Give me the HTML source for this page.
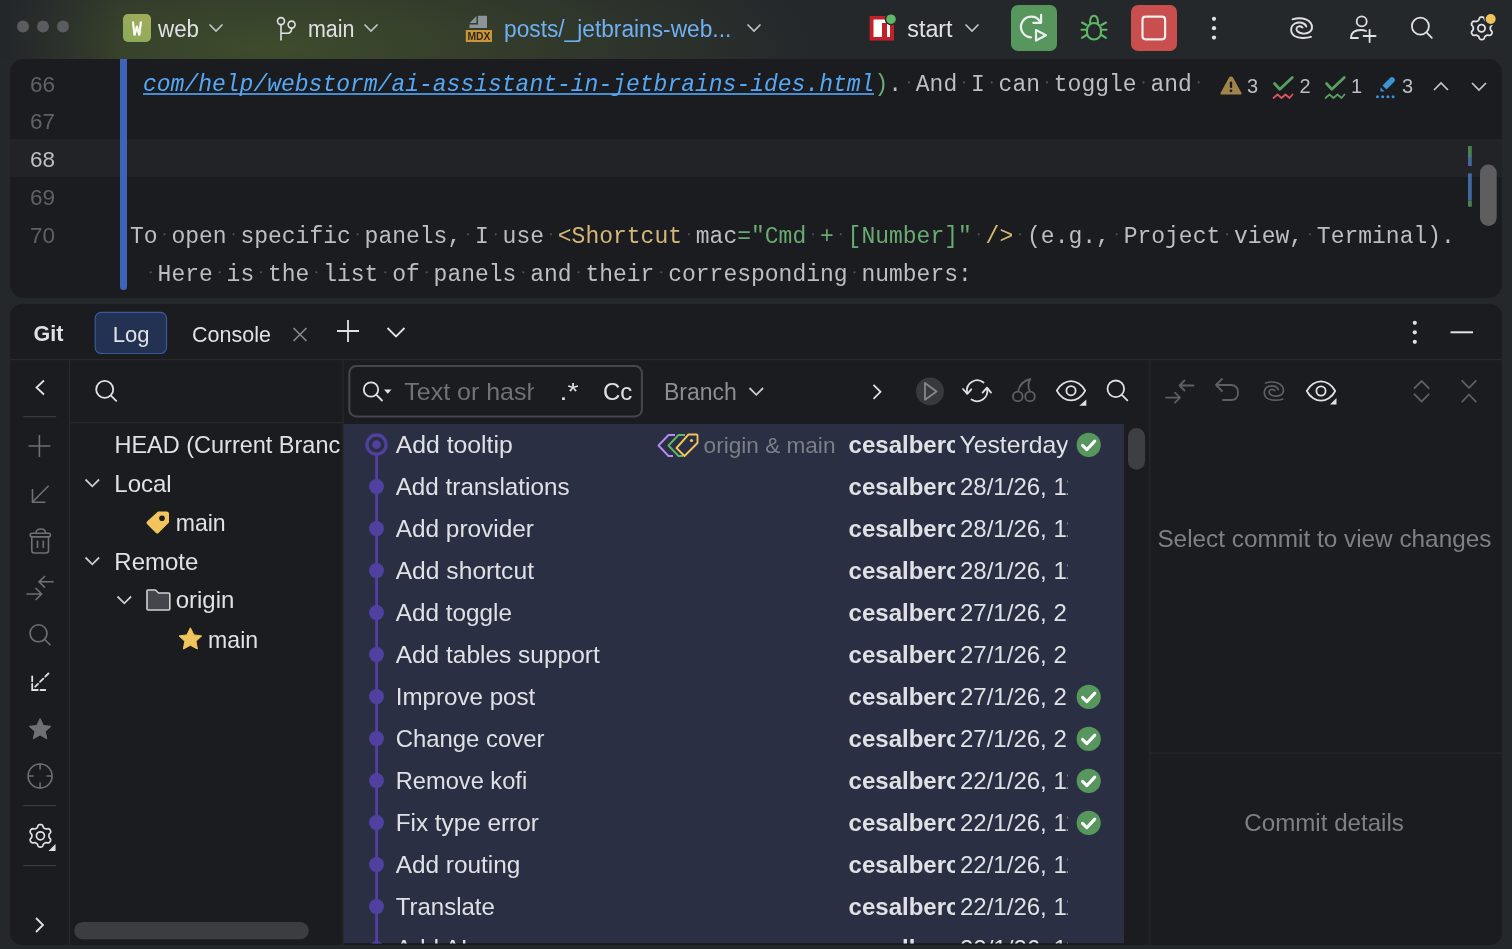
<!DOCTYPE html>
<html><head><meta charset="utf-8">
<style>
*{margin:0;padding:0;box-sizing:border-box}
html,body{width:1512px;height:949px;overflow:hidden;background:#25282b;font-family:"Liberation Sans",sans-serif;color:#dfe1e5}
.a{position:absolute}
#title{left:0;top:0;width:1512px;height:59px;background:linear-gradient(90deg,rgba(35,38,42,1) 0px,rgba(35,38,42,0.6) 50px,rgba(35,38,42,0) 120px),radial-gradient(ellipse 540px 140px at 270px 48px,rgba(78,98,44,0.62),rgba(78,98,44,0) 100%),#25282b}
.panel{background:#1b1c1f}
#editor{left:10px;top:59px;width:1492px;height:239px;border-radius:14px;overflow:hidden}
#curline{left:10px;top:139px;width:1492px;height:38px;background:#222326}
#git{left:10px;top:304px;width:1492px;height:641px;border-radius:12px;overflow:hidden}
#list{left:343px;top:424px;width:781px;height:519px;background:#2a2f43}
.ov{position:absolute;left:0;top:0;will-change:transform}
text{white-space:pre}
.s{font-family:"Liberation Sans",sans-serif}
.m{font-family:"Liberation Mono",monospace}

</style></head><body>
<div id="title" class="a"></div>
<div id="editor" class="a panel"></div>
<div id="curline" class="a"></div>
<div id="git" class="a panel"></div>
<div id="list" class="a"></div>

<svg class="ov" width="1512" height="949" viewBox="0 0 1512 949">
<!-- ===== TITLE BAR ===== -->
<g fill="#5b5c5f"><circle cx="23" cy="26.5" r="6"/><circle cx="43" cy="26.5" r="6"/><circle cx="63" cy="26.5" r="6"/></g>
<defs><linearGradient id="wg" x1="0" y1="1" x2="1" y2="0"><stop offset="0" stop-color="#86ac58"/><stop offset="1" stop-color="#a6ab5c"/></linearGradient></defs>
<rect x="123" y="14" width="28" height="28" rx="5" fill="url(#wg)"/>
<text x="137" y="35.3" class="m" font-size="20" fill="#ffffff" stroke="#ffffff" stroke-width="0.8" text-anchor="middle" transform="translate(137 0) scale(0.78 1) translate(-137 0)">W</text>
<text x="158" y="36.6" class="s" font-size="23" fill="#dfe1e5" textLength="41" lengthAdjust="spacingAndGlyphs">web</text>
<path d="M209.5 24.5 L216 31 L222.5 24.5" fill="none" stroke="#c4c6ca" stroke-width="1.6"/>
<!-- branch icon -->
<g fill="none" stroke="#dfe1e5" stroke-width="1.6">
<circle cx="281" cy="21.1" r="3.5"/><circle cx="291.6" cy="24.6" r="3.5"/>
<path d="M281 24.6 V40.5 M281 33.3 H287.5 Q291.6 33.3 291.6 28.1"/>
</g>
<text x="308" y="36.6" class="s" font-size="23" fill="#dfe1e5" textLength="46.5" lengthAdjust="spacingAndGlyphs">main</text>
<path d="M364.5 24.5 L371 31 L377.5 24.5" fill="none" stroke="#c4c6ca" stroke-width="1.6"/>
<!-- mdx icon -->
<g fill="#8a9499"><path d="M469.5 23 L476.5 16 L476.5 23 Z"/><path d="M478 15.8 H487 V28 H469.5 V24.5 H478 Z"/></g>
<rect x="465.8" y="30" width="26.2" height="12" fill="#c9963a"/>
<text x="479" y="40.3" class="s" font-size="11" font-weight="bold" fill="#33291a" text-anchor="middle" textLength="23" lengthAdjust="spacingAndGlyphs">MDX</text>
<text x="504" y="36.6" class="s" font-size="23" fill="#6fb0f2" textLength="227.3" lengthAdjust="spacingAndGlyphs">posts/_jetbrains-web...</text>
<path d="M747.5 24.5 L754 31 L760.5 24.5" fill="none" stroke="#c4c6ca" stroke-width="1.6"/>
<!-- npm icon -->
<rect x="869.6" y="16" width="24.4" height="24.6" fill="#c12127"/>
<path d="M873.5 19.5 H890 V37 H887 V23 H882 V37 H873.5 Z" fill="#ffffff"/>
<circle cx="891" cy="19.2" r="6.2" fill="#25282b"/><circle cx="891" cy="19.2" r="4.8" fill="#5fb865"/>
<text x="907.3" y="36.6" class="s" font-size="23" fill="#dfe1e5" textLength="45.3" lengthAdjust="spacingAndGlyphs">start</text>
<path d="M965.5 24.5 L972 31 L978.5 24.5" fill="none" stroke="#c4c6ca" stroke-width="1.6"/>
<!-- rerun button -->
<rect x="1011" y="5" width="46" height="46" rx="7" fill="#57965c"/>
<g fill="none" stroke="#eceef0" stroke-width="2.2" stroke-linecap="round" stroke-linejoin="round">
<path d="M1031 37.3 A10.3 10.3 0 1 1 1040 21.5"/>
<path d="M1033.3 22.8 H1041.1 V14.8"/>
<path d="M1036 30 L1046 35.2 L1036 40.5 Z"/>
</g>
<!-- bug -->
<g fill="none" stroke="#5fb865" stroke-width="2.1" stroke-linecap="round">
<rect x="1087" y="23" width="14" height="16.5" rx="7"/>
<path d="M1090 23 Q1090 15.8 1094 15.8 Q1098 15.8 1098 23"/>
<path d="M1081.5 29.8 H1086 M1102 29.8 H1106.5 M1086.5 25 L1082 22.5 M1101.5 25 L1106 22.5 M1086.5 35 L1082 37.8 M1101.5 35 L1106 37.8"/>
</g>
<!-- stop button -->
<rect x="1131" y="5" width="46" height="46" rx="7" fill="#c94f4f"/>
<rect x="1142.5" y="16.7" width="22.6" height="22.6" rx="3" fill="none" stroke="#eceef0" stroke-width="2.2"/>
<!-- kebab -->
<g fill="#dfe1e5"><circle cx="1214" cy="18.8" r="2.1"/><circle cx="1214" cy="28.2" r="2.1"/><circle cx="1214" cy="37.6" r="2.1"/></g>
<!-- spiral -->
<g fill="none" stroke="#dfe1e5" stroke-width="1.9" stroke-linecap="round">
<path d="M1292.5 19.3 C1302 16.5 1312 19.5 1312 27.5 C1312 32 1307 34 1302.5 33.5 C1298 33 1296 30.5 1296.5 28.5 C1297 26 1300 25.5 1302.5 27.5"/>
<path d="M1306.3 26.5 C1305 22.5 1299 21.5 1295 23.5 C1290 26 1290 33 1294.5 36 C1298.5 38.5 1306 38.5 1311 36.9"/>
</g>
<!-- person add -->
<g fill="none" stroke="#dfe1e5" stroke-width="1.8" stroke-linecap="round">
<circle cx="1361.7" cy="21.4" r="5"/>
<path d="M1351 38 Q1351 30 1361 30 Q1364 30 1366 31"/>
<path d="M1351 38 H1358"/>
<path d="M1369.6 30 V42 M1363.6 36 H1375.6"/>
</g>
<!-- search -->
<g fill="none" stroke="#dfe1e5" stroke-width="1.8" stroke-linecap="round">
<circle cx="1420.4" cy="26.2" r="8.5"/><path d="M1426.5 32.3 L1431.8 37.8"/>
</g>
<!-- gear -->
<g fill="none" stroke="#dfe1e5" stroke-width="1.8" stroke-linejoin="round">
<path d="M1490.32 28.30 L1490.32 28.67 L1490.34 29.05 L1490.41 29.43 L1490.57 29.85 L1490.89 30.32 L1491.36 30.86 L1491.80 31.45 L1492.04 32.03 L1492.07 32.55 L1491.97 33.04 L1491.80 33.50 L1491.57 33.94 L1491.30 34.36 L1490.99 34.74 L1490.62 35.07 L1490.15 35.30 L1489.53 35.39 L1488.80 35.30 L1488.09 35.17 L1487.52 35.12 L1487.09 35.19 L1486.72 35.33 L1486.38 35.49 L1486.06 35.68 L1485.74 35.87 L1485.42 36.07 L1485.12 36.32 L1484.85 36.67 L1484.60 37.18 L1484.36 37.86 L1484.07 38.54 L1483.69 39.03 L1483.25 39.32 L1482.78 39.48 L1482.29 39.56 L1481.80 39.58 L1481.31 39.56 L1480.82 39.48 L1480.35 39.32 L1479.91 39.03 L1479.53 38.54 L1479.24 37.86 L1479.00 37.18 L1478.75 36.67 L1478.48 36.32 L1478.18 36.07 L1477.86 35.87 L1477.54 35.68 L1477.22 35.49 L1476.88 35.33 L1476.51 35.19 L1476.08 35.12 L1475.51 35.17 L1474.80 35.30 L1474.07 35.39 L1473.45 35.30 L1472.98 35.07 L1472.61 34.74 L1472.30 34.36 L1472.03 33.94 L1471.80 33.50 L1471.63 33.04 L1471.53 32.55 L1471.56 32.03 L1471.80 31.45 L1472.24 30.86 L1472.71 30.32 L1473.03 29.85 L1473.19 29.43 L1473.26 29.05 L1473.28 28.67 L1473.28 28.30 L1473.28 27.93 L1473.26 27.55 L1473.19 27.17 L1473.03 26.75 L1472.71 26.28 L1472.24 25.74 L1471.80 25.15 L1471.56 24.57 L1471.53 24.05 L1471.63 23.56 L1471.80 23.10 L1472.03 22.66 L1472.30 22.24 L1472.61 21.86 L1472.98 21.53 L1473.45 21.30 L1474.07 21.21 L1474.80 21.30 L1475.51 21.43 L1476.08 21.48 L1476.51 21.41 L1476.88 21.27 L1477.22 21.11 L1477.54 20.92 L1477.86 20.73 L1478.18 20.53 L1478.48 20.28 L1478.75 19.93 L1479.00 19.42 L1479.24 18.74 L1479.53 18.06 L1479.91 17.57 L1480.35 17.28 L1480.82 17.12 L1481.31 17.04 L1481.80 17.02 L1482.29 17.04 L1482.78 17.12 L1483.25 17.28 L1483.69 17.57 L1484.07 18.06 L1484.36 18.74 L1484.60 19.42 L1484.85 19.93 L1485.12 20.28 L1485.42 20.53 L1485.74 20.73 L1486.06 20.92 L1486.38 21.11 L1486.72 21.27 L1487.09 21.41 L1487.52 21.48 L1488.09 21.43 L1488.80 21.30 L1489.53 21.21 L1490.15 21.30 L1490.62 21.53 L1490.99 21.86 L1491.30 22.24 L1491.57 22.66 L1491.80 23.10 L1491.97 23.56 L1492.07 24.05 L1492.04 24.57 L1491.80 25.15 L1491.36 25.74 L1490.89 26.28 L1490.57 26.75 L1490.41 27.17 L1490.34 27.55 L1490.32 27.93 Z"/>
<circle cx="1481.5" cy="28.3" r="3.6"/>
</g>
<circle cx="1490.7" cy="19" r="6.3" fill="#25282b"/><circle cx="1490.7" cy="19" r="5" fill="#f0c35a"/>
<!-- ===== EDITOR ===== -->
<g class="s" font-size="22.5" fill="#5e6167" text-anchor="end">
<text x="55" y="91.5">66</text><text x="55" y="129.3">67</text><text x="55" y="167" fill="#bdbfc3">68</text><text x="55" y="205.2">69</text><text x="55" y="243.2">70</text>
</g>
<path d="M120 59 H127 V286.5 A3.5 3.5 0 0 1 120 286.5 Z" fill="#3d64b8"/>
<g class="m" font-size="23" fill="#bcbec4">
<rect x="143" y="93.2" width="731" height="1.6" fill="#56a8f5"/>
<text x="143" y="91" transform="translate(0 91) scale(1 1.05) translate(0 -91)" xml:space="preserve"><tspan fill="#56a8f5" font-style="italic">com/help/webstorm/ai-assistant-in-jetbrains-ides.html</tspan><tspan fill="#6aab73">)</tspan>. And I can toggle and </text>
<text x="130" y="242.8" transform="translate(0 242.8) scale(1 1.05) translate(0 -242.8)" xml:space="preserve">To open specific panels, I use <tspan fill="#d5b778">&lt;Shortcut</tspan> mac<tspan fill="#6aab73">="Cmd + [Number]"</tspan> <tspan fill="#d5b778">/&gt;</tspan> (e.g., Project view, Terminal).</text>
<text x="143.8" y="280.8" transform="translate(0 280.8) scale(1 1.05) translate(0 -280.8)" xml:space="preserve"> Here is the list of panels and their corresponding numbers:</text>
</g>
<g fill="#55575b"><circle cx="908.9" cy="82.4" r="1.05"/><circle cx="964.1" cy="82.4" r="1.05"/><circle cx="991.7" cy="82.4" r="1.05"/><circle cx="1046.9" cy="82.4" r="1.05"/><circle cx="1143.5" cy="82.4" r="1.05"/><circle cx="1198.7" cy="82.4" r="1.05"/><circle cx="164.5" cy="234.2" r="1.05"/><circle cx="233.5" cy="234.2" r="1.05"/><circle cx="357.7" cy="234.2" r="1.05"/><circle cx="468.1" cy="234.2" r="1.05"/><circle cx="495.7" cy="234.2" r="1.05"/><circle cx="550.9" cy="234.2" r="1.05"/><circle cx="688.9" cy="234.2" r="1.05"/><circle cx="813.1" cy="234.2" r="1.05"/><circle cx="840.7" cy="234.2" r="1.05"/><circle cx="978.7" cy="234.2" r="1.05"/><circle cx="1020.1" cy="234.2" r="1.05"/><circle cx="1116.7" cy="234.2" r="1.05"/><circle cx="1227.1" cy="234.2" r="1.05"/><circle cx="1309.9" cy="234.2" r="1.05"/><circle cx="150.7" cy="272.2" r="1.05"/><circle cx="219.7" cy="272.2" r="1.05"/><circle cx="261.1" cy="272.2" r="1.05"/><circle cx="316.3" cy="272.2" r="1.05"/><circle cx="385.3" cy="272.2" r="1.05"/><circle cx="426.7" cy="272.2" r="1.05"/><circle cx="523.3" cy="272.2" r="1.05"/><circle cx="578.5" cy="272.2" r="1.05"/><circle cx="661.3" cy="272.2" r="1.05"/><circle cx="854.5" cy="272.2" r="1.05"/></g>
<!-- inspection widget -->
<path d="M1231 76.5 Q1232 76 1233 77.5 L1241.5 93 Q1242 94.5 1240.5 94.5 H1221.5 Q1220 94.5 1220.5 93 L1229 77.5 Q1230 76 1231 76.5 Z" fill="#a0854a"/>
<rect x="1229.8" y="81.5" width="2.4" height="6.5" rx="1" fill="#1b1c1f"/><circle cx="1231" cy="90.8" r="1.4" fill="#1b1c1f"/>
<g class="s" font-size="20" fill="#bcbec4"><text x="1247" y="93">3</text><text x="1299.5" y="93">2</text><text x="1351" y="93">1</text><text x="1402" y="93">3</text></g>
<g fill="none" stroke-width="2.3" stroke-linecap="round" stroke-linejoin="round">
<path d="M1274.5 83.5 L1279.8 89.3 L1292.3 77.5" stroke="#5a9f62" stroke-width="2.8"/>
<path d="M1273.5 98 L1277.5 94.5 L1281.5 98 L1285.5 94.5 L1289.5 98 L1292.5 94.5" stroke="#e05561" stroke-width="1.7"/>
<path d="M1326.5 83.5 L1331.8 89.3 L1344.3 77.5" stroke="#5a9f62" stroke-width="2.8"/>
<path d="M1325.5 98 L1329.5 94.5 L1333.5 98 L1337.5 94.5 L1341.5 98 L1344.5 94.5" stroke="#5a9f62" stroke-width="1.7"/>
</g>
<path d="M1382.5 85.5 L1390 78 Q1392 76 1394 78 Q1396 80 1394 82 L1386.5 89.5 Z" fill="#3a95d6"/><path d="M1380.5 87.5 L1384.5 91.5 H1380.5 Z" fill="#3a95d6"/>
<g fill="#3a95d6"><circle cx="1377.5" cy="96.8" r="1.5"/><circle cx="1382.7" cy="96.8" r="1.5"/><circle cx="1387.9" cy="96.8" r="1.5"/><circle cx="1393.1" cy="96.8" r="1.5"/></g>
<path d="M1434 90 L1441 83 L1448 90" fill="none" stroke="#c4c6ca" stroke-width="1.7"/>
<path d="M1472 83 L1479 90 L1486 83" fill="none" stroke="#c4c6ca" stroke-width="1.7"/>
<rect x="1468" y="146" width="3.8" height="11" fill="#4b8152"/><rect x="1468" y="157" width="3.8" height="9" fill="#41699d"/>
<rect x="1468" y="173.3" width="3.8" height="27.4" fill="#41699d"/><rect x="1468" y="200.7" width="3.8" height="6" fill="#4b8152"/>
<rect x="1480" y="164.5" width="16.7" height="61.4" rx="8.3" fill="#5e5e60"/>
<!-- ===== GIT HEADER ===== -->
<text x="33.5" y="341" class="s" font-size="21.5" font-weight="bold" fill="#dfe1e5">Git</text>
<rect x="95.2" y="312.3" width="71.3" height="41.2" rx="6" fill="#233152" stroke="#3a5a9e" stroke-width="1.2"/>
<text x="112.8" y="341.5" class="s" font-size="22" fill="#dfe1e5">Log</text>
<text x="192" y="341.5" class="s" font-size="21.5" fill="#dfe1e5">Console</text>
<path d="M293.5 328 L306.5 341 M306.5 328 L293.5 341" stroke="#85878b" stroke-width="1.7"/>
<path d="M348 320 V342 M337 331 H359" stroke="#dfe1e5" stroke-width="1.8"/>
<path d="M387.5 328 L396 336.5 L404.5 328" fill="none" stroke="#dfe1e5" stroke-width="1.8"/>
<g fill="#dfe1e5"><circle cx="1414.8" cy="322.8" r="2.1"/><circle cx="1414.8" cy="332.3" r="2.1"/><circle cx="1414.8" cy="341.8" r="2.1"/></g>
<path d="M1450.5 332.3 H1473" stroke="#dfe1e5" stroke-width="2"/>
<!-- dividers -->
<g fill="#27292c">
<rect x="10" y="359" width="1492" height="1.2"/>
<rect x="69" y="360" width="1.2" height="585"/>
<rect x="342.5" y="360" width="1.2" height="585"/>
<rect x="1149.2" y="360" width="1.2" height="585"/>
<rect x="70" y="422" width="273" height="1.2"/>
<rect x="1150" y="752.5" width="352" height="1.2"/>
</g>
<!-- ===== LEFT TOOLBAR ===== -->
<path d="M44 380.5 L36.5 387.5 L44 394.5" fill="none" stroke="#dfe1e5" stroke-width="1.8"/>
<g fill="#3a3b3f"><rect x="23.3" y="416" width="33" height="1.2"/><rect x="23.3" y="805" width="33" height="1.2"/><rect x="23.3" y="865" width="33" height="1.2"/></g>
<g fill="none" stroke="#6e7073" stroke-width="1.6">
<path d="M39.4 435 V457 M28.4 446 H50.4"/>
<path d="M48.6 485.8 L32.5 502 M32.5 489 V502.3 H45.4"/>
<path d="M36 533 Q36 529 41 529 Q45.5 529 45.5 533"/>
<rect x="30.2" y="533.3" width="20.2" height="3.6" rx="1.8"/>
<path d="M31.8 537 V550.5 Q31.8 553 34.3 553 H46 Q48.5 553 48.5 550.5 V537"/>
<path d="M37.5 540.5 V548 M43.3 540.5 V548"/>
<path d="M53.7 581.8 H39 M45 576 L39 581.8 L45 587.6"/>
<path d="M26.5 594 H41.6 M35.6 588 L41.6 594 L35.6 600"/>
<circle cx="38.5" cy="633.3" r="8.5"/><path d="M44.5 639.3 L50.5 645.3"/>
<circle cx="40.1" cy="776" r="12"/><path d="M40.1 764 V769.5 M40.1 782.5 V788 M28.1 776 H33.6 M46.6 776 H52.1"/>
</g>
<g fill="none" stroke="#dfe1e5" stroke-width="1.8" stroke-linecap="round">
<path d="M48.4 673.5 L45.2 676.7 M43.3 678.6 L40 681.9 M38.1 683.8 L35.2 686.7"/>
<path d="M32.2 676.3 V681.3 M32.2 684 V690 H37.8 M40.5 690 H45.3"/>
</g>
<path d="M40.1 718.5 L43.4 725.5 L51 726.3 L45.3 731.4 L46.9 738.9 L40.1 735 L33.3 738.9 L34.9 731.4 L29.2 726.3 L36.8 725.5 Z" fill="#6e7073" stroke="#6e7073" stroke-width="1" stroke-linejoin="round"/>
<g fill="none" stroke="#dfe1e5" stroke-width="1.7" stroke-linejoin="round">
<path d="M48.92 835.80 L48.92 836.17 L48.94 836.55 L49.01 836.93 L49.17 837.35 L49.49 837.82 L49.96 838.36 L50.40 838.95 L50.64 839.53 L50.67 840.05 L50.57 840.54 L50.40 841.00 L50.17 841.44 L49.90 841.86 L49.59 842.24 L49.22 842.57 L48.75 842.80 L48.13 842.89 L47.40 842.80 L46.69 842.67 L46.12 842.62 L45.69 842.69 L45.32 842.83 L44.98 842.99 L44.66 843.18 L44.34 843.37 L44.02 843.57 L43.72 843.82 L43.45 844.17 L43.20 844.68 L42.96 845.36 L42.67 846.04 L42.29 846.53 L41.85 846.82 L41.38 846.98 L40.89 847.06 L40.40 847.08 L39.91 847.06 L39.42 846.98 L38.95 846.82 L38.51 846.53 L38.13 846.04 L37.84 845.36 L37.60 844.68 L37.35 844.17 L37.08 843.82 L36.78 843.57 L36.46 843.37 L36.14 843.18 L35.82 842.99 L35.48 842.83 L35.11 842.69 L34.68 842.62 L34.11 842.67 L33.40 842.80 L32.67 842.89 L32.05 842.80 L31.58 842.57 L31.21 842.24 L30.90 841.86 L30.63 841.44 L30.40 841.00 L30.23 840.54 L30.13 840.05 L30.16 839.53 L30.40 838.95 L30.84 838.36 L31.31 837.82 L31.63 837.35 L31.79 836.93 L31.86 836.55 L31.88 836.17 L31.88 835.80 L31.88 835.43 L31.86 835.05 L31.79 834.67 L31.63 834.25 L31.31 833.78 L30.84 833.24 L30.40 832.65 L30.16 832.07 L30.13 831.55 L30.23 831.06 L30.40 830.60 L30.63 830.16 L30.90 829.74 L31.21 829.36 L31.58 829.03 L32.05 828.80 L32.67 828.71 L33.40 828.80 L34.11 828.93 L34.68 828.98 L35.11 828.91 L35.48 828.77 L35.82 828.61 L36.14 828.42 L36.46 828.23 L36.78 828.03 L37.08 827.78 L37.35 827.43 L37.60 826.92 L37.84 826.24 L38.13 825.56 L38.51 825.07 L38.95 824.78 L39.42 824.62 L39.91 824.54 L40.40 824.52 L40.89 824.54 L41.38 824.62 L41.85 824.78 L42.29 825.07 L42.67 825.56 L42.96 826.24 L43.20 826.92 L43.45 827.43 L43.72 827.78 L44.02 828.03 L44.34 828.23 L44.66 828.42 L44.98 828.61 L45.32 828.77 L45.69 828.91 L46.12 828.98 L46.69 828.93 L47.40 828.80 L48.13 828.71 L48.75 828.80 L49.22 829.03 L49.59 829.36 L49.90 829.74 L50.17 830.16 L50.40 830.60 L50.57 831.06 L50.67 831.55 L50.64 832.07 L50.40 832.65 L49.96 833.24 L49.49 833.78 L49.17 834.25 L49.01 834.67 L48.94 835.05 L48.92 835.43 Z"/>
<circle cx="40.4" cy="835.8" r="4"/>
</g>
<path d="M55.5 844 V851 H48.5 Z" fill="#dfe1e5"/>
<path d="M36 918 L43 925 L36 932" fill="none" stroke="#dfe1e5" stroke-width="1.8"/>
<rect x="74.2" y="922" width="234.6" height="17.2" rx="8.6" fill="#3c3d40"/>
<!-- ===== BRANCH TREE ===== -->
<g fill="none" stroke="#dfe1e5" stroke-width="1.8"><circle cx="104.7" cy="389.4" r="8.5"/><path d="M110.7 395.4 L116.7 401.4"/></g>
<defs><clipPath id="treeclip"><rect x="70" y="423" width="271.5" height="500"/></clipPath></defs>
<g class="s" font-size="24" fill="#dfe1e5" clip-path="url(#treeclip)">
<text x="114.5" y="453" textLength="225.7" lengthAdjust="spacingAndGlyphs">HEAD (Current Branc</text>
<text x="114.3" y="492.2">Local</text>
<text x="175.7" y="530.9" textLength="50" lengthAdjust="spacingAndGlyphs">main</text>
<text x="114.3" y="570.3">Remote</text>
<text x="175.7" y="607.9">origin</text>
<text x="208.1" y="647.5" textLength="50" lengthAdjust="spacingAndGlyphs">main</text>
</g>
<g fill="none" stroke="#c9cbcf" stroke-width="1.8">
<path d="M85.5 479.5 L92.3 486.3 L99.1 479.5"/>
<path d="M85.5 557.5 L92.3 564.3 L99.1 557.5"/>
<path d="M117.5 596.5 L124.3 603.3 L131.1 596.5"/>
</g>
<path d="M158 511.5 H166.5 Q169 511.5 169 514 V522.5 L158.5 533 Q157.3 534.2 156 533 L147 524 Q145.8 522.8 147 521.5 Z" fill="#f2c55c"/>
<circle cx="162" cy="518.2" r="2.8" fill="#1b1c1f"/>
<path d="M147 591 Q147 590 148 590 H155.5 L158.5 593 H168.5 Q169.8 593 169.8 594.3 V608.8 Q169.8 610 168.5 610 H148.3 Q147 610 147 608.8 Z" fill="#43454a" stroke="#cfd1d5" stroke-width="1.6" stroke-linejoin="round"/>
<path d="M190.4 627.8 L193.9 634.9 L201.7 635.9 L196 641.3 L197.4 649 L190.4 645.3 L183.4 649 L184.8 641.3 L179.1 635.9 L186.9 634.9 Z" fill="#f2c55c" stroke="#f2c55c" stroke-width="1" stroke-linejoin="round"/>
<!-- ===== COMMIT TOOLBAR ===== -->
<rect x="349.3" y="366" width="292.6" height="50.4" rx="7" fill="none" stroke="#45474b" stroke-width="2"/>
<g fill="none" stroke="#dfe1e5" stroke-width="1.8"><circle cx="371" cy="389.5" r="7.2"/><path d="M376.2 394.7 L382.5 401"/></g>
<path d="M384 389.5 H391.5 L387.75 393.8 Z" fill="#dfe1e5"/>
<defs><clipPath id="phclip"><rect x="400" y="370" width="134" height="40"/></clipPath></defs>
<text x="404.3" y="400" class="s" font-size="24" fill="#6f7276" clip-path="url(#phclip)" textLength="136" lengthAdjust="spacingAndGlyphs">Text or hash</text>
<text x="559.5" y="400" class="s" font-size="24" fill="#dfe1e5" textLength="19" lengthAdjust="spacingAndGlyphs">.*</text>
<text x="603" y="400" class="s" font-size="24" fill="#dfe1e5">Cc</text>
<text x="663.9" y="399.7" class="s" font-size="23" fill="#8b8e93">Branch</text>
<path d="M749.5 388 L756.3 394.8 L763.1 388" fill="none" stroke="#c9cbcf" stroke-width="1.8"/>
<path d="M873.5 384.8 L880.5 391.8 L873.5 398.8" fill="none" stroke="#dfe1e5" stroke-width="1.8"/>
<circle cx="930" cy="391.4" r="14" fill="#38393c"/>
<path d="M925 383 L936.5 391.4 L925 399.8 Z" fill="none" stroke="#85878b" stroke-width="1.8" stroke-linejoin="round"/>
<g fill="none" stroke="#dfe1e5" stroke-width="1.8" stroke-linecap="round" stroke-linejoin="round"><path d="M967 392 A10.3 10.3 0 0 1 983.5 382.5"/><path d="M987.2 389 A10.3 10.3 0 0 1 971.5 399.5"/><path d="M963 389 L967.3 393.8 L971.3 389.3"/><path d="M982.6 392.6 L987 387.6 L991 392.6"/></g>
<g fill="none" stroke="#5d5f63" stroke-width="1.8" stroke-linejoin="round"><circle cx="1017.8" cy="396.4" r="4.8"/><circle cx="1030" cy="396.4" r="4.8"/><path d="M1018 391.6 Q1020 381.5 1030.4 379 Q1026.5 385 1030 391.6"/></g>
<g fill="none" stroke="#dfe1e5" stroke-width="1.8"><path d="M1056.8 390.7 C1060.0 384.2 1066.0 381.1 1071.0 381.1 C1076.0 381.1 1082.0 384.2 1085.2 390.7 C1082.0 397.2 1076.0 400.3 1071.0 400.3 C1066.0 400.3 1060.0 397.2 1056.8 390.7 Z" stroke-linejoin="round"/><circle cx="1071" cy="390.7" r="4.6"/></g><path d="M1086.3 399.5 V405.8 H1079.3 Z" fill="#dfe1e5"/>
<g fill="none" stroke="#dfe1e5" stroke-width="1.8"><circle cx="1115.8" cy="388.8" r="8.3"/><path d="M1121.8 394.8 L1127.8 400.8"/></g>
<g fill="none" stroke="#5d5f63" stroke-width="1.8" stroke-linecap="round" stroke-linejoin="round">
<path d="M1193.5 385.5 H1179.5 M1184.5 380.5 L1179.5 385.5 L1184.5 390.5"/><path d="M1166 397.7 H1180 M1175 392.7 L1180 397.7 L1175 402.7"/>
<path d="M1216 385 H1231 Q1238 385 1238 392.7 Q1238 400 1231 400 H1223 M1222 379 L1216 385 L1222 391"/>
<g transform="translate(1273.8 391) scale(0.92) translate(-1301.5 -28)"><path d="M1292.5 19.3 C1302 16.5 1312 19.5 1312 27.5 C1312 32 1307 34 1302.5 33.5 C1298 33 1296 30.5 1296.5 28.5 C1297 26 1300 25.5 1302.5 27.5"/><path d="M1306.3 26.5 C1305 22.5 1299 21.5 1295 23.5 C1290 26 1290 33 1294.5 36 C1298.5 38.5 1306 38.5 1311 36.9"/></g>
<path d="M1414.5 388.2 L1421.6 381 L1428.7 388.2 M1414.5 394.3 L1421.6 401.5 L1428.7 394.3"/>
<path d="M1462.2 380.8 L1469 387.8 L1475.8 380.8 M1462.2 401.6 L1469 394.5 L1475.8 401.6"/>
</g>
<g fill="none" stroke="#dfe1e5" stroke-width="1.8"><path d="M1306.8 391.0 C1310.0 384.5 1316.0 381.4 1321.0 381.4 C1326.0 381.4 1332.0 384.5 1335.2 391.0 C1332.0 397.5 1326.0 400.6 1321.0 400.6 C1316.0 400.6 1310.0 397.5 1306.8 391.0 Z" stroke-linejoin="round"/><circle cx="1321" cy="391" r="4.6"/></g><path d="M1336.5 398 V404.5 H1330 Z" fill="#dfe1e5"/>
<text x="1324.4" y="546.7" class="s" font-size="24.2" fill="#7d8085" text-anchor="middle" textLength="334" lengthAdjust="spacingAndGlyphs">Select commit to view changes</text>
<text x="1324.1" y="830.8" class="s" font-size="24.2" fill="#7d8085" text-anchor="middle" textLength="159.6" lengthAdjust="spacingAndGlyphs">Commit details</text>
<!-- ===== COMMIT LIST ===== -->
<defs><clipPath id="listclip"><rect x="343" y="424" width="781" height="519.5"/></clipPath><clipPath id="authclip"><rect x="840" y="424" width="115" height="520"/></clipPath><clipPath id="dateclip"><rect x="955" y="424" width="112.6" height="520"/></clipPath></defs>
<g clip-path="url(#listclip)">
<rect x="375.2" y="444" width="2.8" height="520" fill="#5040a0"/>
<circle cx="376.5" cy="444.6" r="9.6" fill="#2a2f43" stroke="#5040a0" stroke-width="3.3"/><circle cx="376.5" cy="444.6" r="4.4" fill="#5040a0"/>
<text x="395.7" y="452.7" class="s" font-size="24.4" fill="#dfe1e5" textLength="117.1" lengthAdjust="spacingAndGlyphs">Add tooltip</text>
<text x="848.6" y="452.7" class="s" font-size="24" font-weight="bold" fill="#dfe1e5" clip-path="url(#authclip)">cesalbercode</text>
<text x="959.5" y="452.7" class="s" font-size="24" fill="#dfe1e5" clip-path="url(#dateclip)" textLength="109" lengthAdjust="spacingAndGlyphs">Yesterday</text>
<circle cx="1088.7" cy="444.9" r="12.1" fill="#57965c"/><path d="M1082.5 445.4 L1086.8 449.6 L1094.8 441.1" fill="none" stroke="#ffffff" stroke-width="3" stroke-linecap="round" stroke-linejoin="round"/>
<circle cx="376.5" cy="486.6" r="7.5" fill="#5040a0"/>
<text x="395.7" y="494.7" class="s" font-size="24.4" fill="#dfe1e5" textLength="173.9" lengthAdjust="spacingAndGlyphs">Add translations</text>
<text x="848.6" y="494.7" class="s" font-size="24" font-weight="bold" fill="#dfe1e5" clip-path="url(#authclip)">cesalbercode</text>
<text x="960" y="494.7" class="s" font-size="24" fill="#dfe1e5" clip-path="url(#dateclip)">28/1/26, 11:00</text>
<circle cx="376.5" cy="528.6" r="7.5" fill="#5040a0"/>
<text x="395.7" y="536.7" class="s" font-size="24.4" fill="#dfe1e5" textLength="138.3" lengthAdjust="spacingAndGlyphs">Add provider</text>
<text x="848.6" y="536.7" class="s" font-size="24" font-weight="bold" fill="#dfe1e5" clip-path="url(#authclip)">cesalbercode</text>
<text x="960" y="536.7" class="s" font-size="24" fill="#dfe1e5" clip-path="url(#dateclip)">28/1/26, 11:00</text>
<circle cx="376.5" cy="570.6" r="7.5" fill="#5040a0"/>
<text x="395.7" y="578.7" class="s" font-size="24.4" fill="#dfe1e5" textLength="138.3" lengthAdjust="spacingAndGlyphs">Add shortcut</text>
<text x="848.6" y="578.7" class="s" font-size="24" font-weight="bold" fill="#dfe1e5" clip-path="url(#authclip)">cesalbercode</text>
<text x="960" y="578.7" class="s" font-size="24" fill="#dfe1e5" clip-path="url(#dateclip)">28/1/26, 11:00</text>
<circle cx="376.5" cy="612.6" r="7.5" fill="#5040a0"/>
<text x="395.7" y="620.7" class="s" font-size="24.4" fill="#dfe1e5" textLength="116.3" lengthAdjust="spacingAndGlyphs">Add toggle</text>
<text x="848.6" y="620.7" class="s" font-size="24" font-weight="bold" fill="#dfe1e5" clip-path="url(#authclip)">cesalbercode</text>
<text x="960" y="620.7" class="s" font-size="24" fill="#dfe1e5" clip-path="url(#dateclip)">27/1/26, 22:00</text>
<circle cx="376.5" cy="654.6" r="7.5" fill="#5040a0"/>
<text x="395.7" y="662.7" class="s" font-size="24.4" fill="#dfe1e5" textLength="204.0" lengthAdjust="spacingAndGlyphs">Add tables support</text>
<text x="848.6" y="662.7" class="s" font-size="24" font-weight="bold" fill="#dfe1e5" clip-path="url(#authclip)">cesalbercode</text>
<text x="960" y="662.7" class="s" font-size="24" fill="#dfe1e5" clip-path="url(#dateclip)">27/1/26, 22:00</text>
<circle cx="376.5" cy="696.6" r="7.5" fill="#5040a0"/>
<text x="395.7" y="704.7" class="s" font-size="24.4" fill="#dfe1e5" textLength="139.6" lengthAdjust="spacingAndGlyphs">Improve post</text>
<text x="848.6" y="704.7" class="s" font-size="24" font-weight="bold" fill="#dfe1e5" clip-path="url(#authclip)">cesalbercode</text>
<text x="960" y="704.7" class="s" font-size="24" fill="#dfe1e5" clip-path="url(#dateclip)">27/1/26, 22:00</text>
<circle cx="1088.7" cy="696.9" r="12.1" fill="#57965c"/><path d="M1082.5 697.4 L1086.8 701.6 L1094.8 693.1" fill="none" stroke="#ffffff" stroke-width="3" stroke-linecap="round" stroke-linejoin="round"/>
<circle cx="376.5" cy="738.6" r="7.5" fill="#5040a0"/>
<text x="395.7" y="746.7" class="s" font-size="24.4" fill="#dfe1e5" textLength="148.8" lengthAdjust="spacingAndGlyphs">Change cover</text>
<text x="848.6" y="746.7" class="s" font-size="24" font-weight="bold" fill="#dfe1e5" clip-path="url(#authclip)">cesalbercode</text>
<text x="960" y="746.7" class="s" font-size="24" fill="#dfe1e5" clip-path="url(#dateclip)">27/1/26, 22:00</text>
<circle cx="1088.7" cy="738.9" r="12.1" fill="#57965c"/><path d="M1082.5 739.4 L1086.8 743.6 L1094.8 735.1" fill="none" stroke="#ffffff" stroke-width="3" stroke-linecap="round" stroke-linejoin="round"/>
<circle cx="376.5" cy="780.6" r="7.5" fill="#5040a0"/>
<text x="395.7" y="788.7" class="s" font-size="24.4" fill="#dfe1e5" textLength="131.5" lengthAdjust="spacingAndGlyphs">Remove kofi</text>
<text x="848.6" y="788.7" class="s" font-size="24" font-weight="bold" fill="#dfe1e5" clip-path="url(#authclip)">cesalbercode</text>
<text x="960" y="788.7" class="s" font-size="24" fill="#dfe1e5" clip-path="url(#dateclip)">22/1/26, 11:00</text>
<circle cx="1088.7" cy="780.9" r="12.1" fill="#57965c"/><path d="M1082.5 781.4 L1086.8 785.6 L1094.8 777.1" fill="none" stroke="#ffffff" stroke-width="3" stroke-linecap="round" stroke-linejoin="round"/>
<circle cx="376.5" cy="822.6" r="7.5" fill="#5040a0"/>
<text x="395.7" y="830.7" class="s" font-size="24.4" fill="#dfe1e5" textLength="143.1" lengthAdjust="spacingAndGlyphs">Fix type error</text>
<text x="848.6" y="830.7" class="s" font-size="24" font-weight="bold" fill="#dfe1e5" clip-path="url(#authclip)">cesalbercode</text>
<text x="960" y="830.7" class="s" font-size="24" fill="#dfe1e5" clip-path="url(#dateclip)">22/1/26, 11:00</text>
<circle cx="1088.7" cy="822.9" r="12.1" fill="#57965c"/><path d="M1082.5 823.4 L1086.8 827.6 L1094.8 819.1" fill="none" stroke="#ffffff" stroke-width="3" stroke-linecap="round" stroke-linejoin="round"/>
<circle cx="376.5" cy="864.6" r="7.5" fill="#5040a0"/>
<text x="395.7" y="872.7" class="s" font-size="24.4" fill="#dfe1e5" textLength="124.6" lengthAdjust="spacingAndGlyphs">Add routing</text>
<text x="848.6" y="872.7" class="s" font-size="24" font-weight="bold" fill="#dfe1e5" clip-path="url(#authclip)">cesalbercode</text>
<text x="960" y="872.7" class="s" font-size="24" fill="#dfe1e5" clip-path="url(#dateclip)">22/1/26, 11:00</text>
<circle cx="376.5" cy="906.6" r="7.5" fill="#5040a0"/>
<text x="395.7" y="914.7" class="s" font-size="24.4" fill="#dfe1e5" textLength="99.2" lengthAdjust="spacingAndGlyphs">Translate</text>
<text x="848.6" y="914.7" class="s" font-size="24" font-weight="bold" fill="#dfe1e5" clip-path="url(#authclip)">cesalbercode</text>
<text x="960" y="914.7" class="s" font-size="24" fill="#dfe1e5" clip-path="url(#dateclip)">22/1/26, 11:00</text>
<circle cx="376.5" cy="948.6" r="7.5" fill="#5040a0"/>
<text x="395.7" y="956.7" class="s" font-size="24.4" fill="#dfe1e5">Add AI</text>
<text x="848.6" y="956.7" class="s" font-size="24" font-weight="bold" fill="#dfe1e5" clip-path="url(#authclip)">cesalbercode</text>
<text x="960" y="956.7" class="s" font-size="24" fill="#dfe1e5" clip-path="url(#dateclip)">22/1/26, 11:00</text>
</g>
<g fill="none" stroke-width="1.9" stroke-linejoin="round">
<path d="M675 435 H668.5 L658.5 445.5 L668.5 456 H673" stroke="#b88af5"/>
<path d="M685 435 H678.5 L668.5 445.5 L678.5 456 H683" stroke="#5fb865"/>
<path d="M688.5 434.5 L696.5 434.5 Q697.5 434.5 697.5 435.5 V443 L684.5 456 L676.5 448 Z" stroke="#f2c55c" transform="rotate(0)"/>
</g>
<circle cx="691.5" cy="440.5" r="1.6" fill="#f2c55c"/>
<text x="703.6" y="452.8" class="s" font-size="22.6" fill="#7c7f85">origin &amp; main</text>
<rect x="1128" y="428" width="17" height="41.7" rx="8.5" fill="#3e3f43"/>

</svg>
</body></html>
